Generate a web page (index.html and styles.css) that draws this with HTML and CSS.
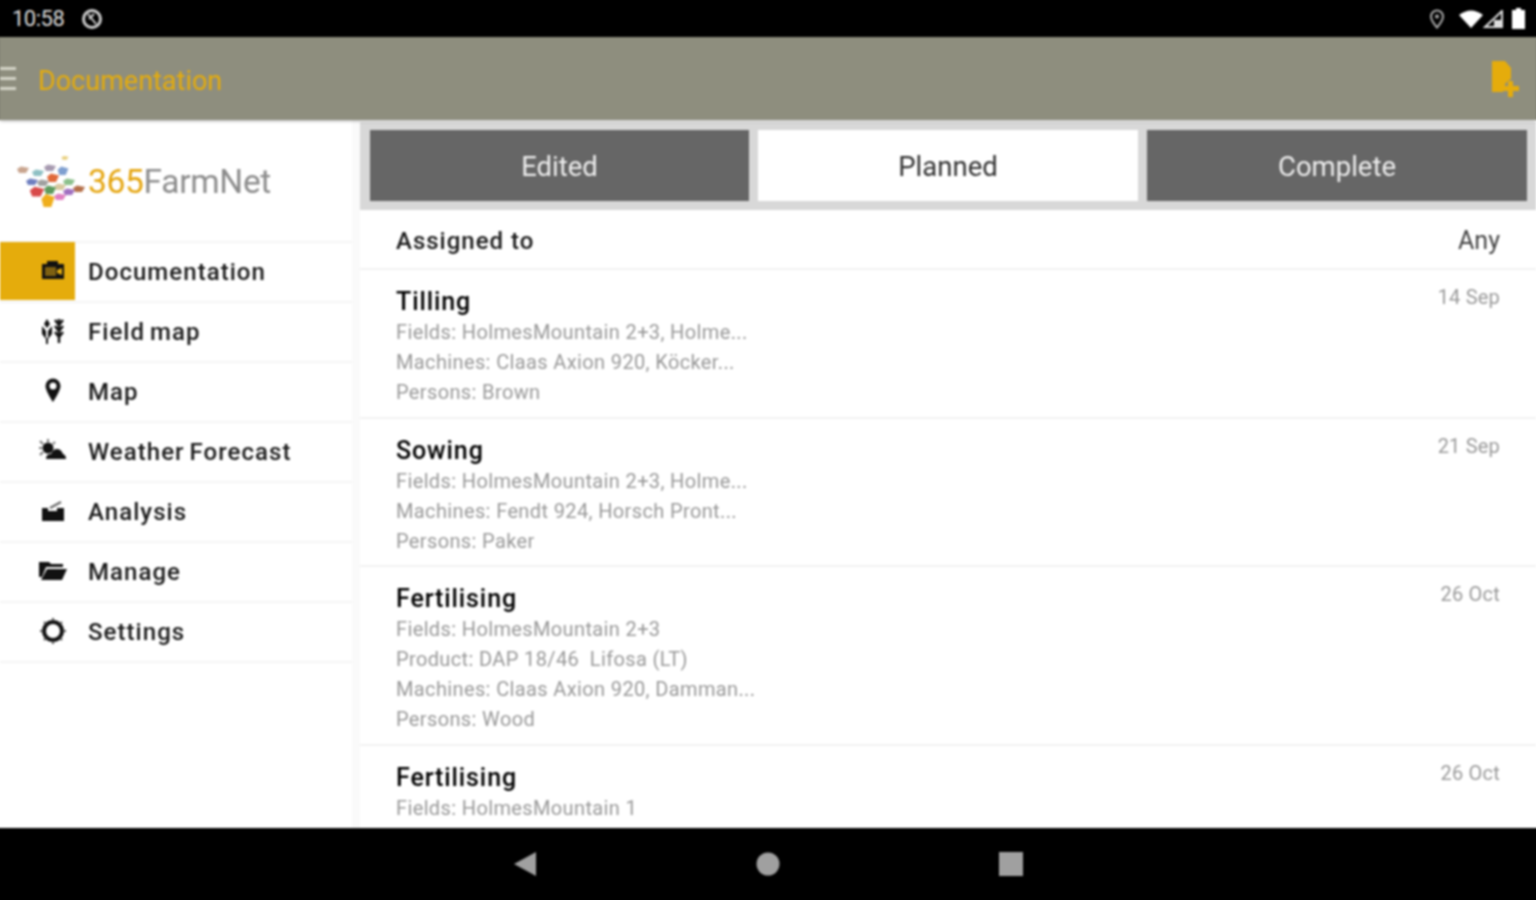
FILE: index.html
```html
<!DOCTYPE html>
<html lang="en">
<head>
    <meta charset="UTF-8">
    <meta name="viewport" content="width=device-width, initial-scale=1.0">
    <title>Documentation</title>
    <link rel="stylesheet" href="styles.css">
</head>
<body>
    <div class="app">
        <div class="status-bar">
            <span class="clock">10:58</span>
            <svg class="status-sync" width="24" height="24" viewBox="0 0 24 24"><circle cx="12" cy="12" r="8.5" fill="none" stroke="#ccc" stroke-width="3"/><path d="M8 7l8 10M14 7l-5 5" fill="none" stroke="#ccc" stroke-width="2"/></svg>
            <span class="status-right">
                <svg width="18" height="20" viewBox="0 0 18 20"><path d="M9 1.500a6 6 0 0 0-6 6c0 4 6 11 6 11s6-7 6-11a6 6 0 0 0-6-6z" fill="none" stroke="#aaa" stroke-width="2"/><circle cx="9" cy="7.500" r="2" fill="#aaa"/></svg>
                <svg class="status-wifi" width="24" height="18" viewBox="0 0 24 18"><path d="M0 5Q12-4 24 5L12 18z" fill="#fff"/></svg>
                <svg class="status-signal" width="20" height="18" viewBox="0 0 20 18"><path d="M19 1v16H2z" fill="none" stroke="#ddd" stroke-width="2"/><path d="M11 10v7h7v-7z" fill="#ddd"/></svg>
                <svg class="status-battery" width="13" height="21" viewBox="0 0 13 21"><path d="M4 0h5v2h4v19H0V2h4z" fill="#fff"/></svg>
            </span>
        </div>

        <div class="toolbar">
            <div class="burger"><i></i><i></i><i></i></div>
            <div class="toolbar-title">Documentation</div>
            <svg class="toolbar-add" width="29" height="38" viewBox="0 0 29 38"><path d="M1 1h13l6 7v11l-3 2-3 3v3l-2 2v3H1z" fill="#e5ac0c"/><path d="M17 21h5v5h6v5h-6v6h-5v-6h-5v-5h5z" fill="#e5ac0c"/></svg>
        </div>

        <div class="content">
            <aside class="sidebar">
                <div class="logo">
                    <svg width="72" height="56" viewBox="0 0 72 56">
                        <defs><path id="leaf" d="M-6-1L-2-3.500 6-2 3 3-4 3z"/></defs>
                        <use href="#leaf" transform="translate(51 4) scale(.6)" fill="#e8cf7d"/>
                        <use href="#leaf" transform="translate(9 16)" fill="#c9a58f"/>
                        <use href="#leaf" transform="translate(24 19)" fill="#8fc0c4"/>
                        <use href="#leaf" transform="translate(36 14)" fill="#a79ab0"/>
                        <use href="#leaf" transform="translate(49 17) scale(.9 1.300)" fill="#7f9fd0"/>
                        <use href="#leaf" transform="translate(18 28)" fill="#6f7fc0"/>
                        <use href="#leaf" transform="translate(29 29)" fill="#a0a0a0"/>
                        <use href="#leaf" transform="translate(39 24) scale(1 1.300)" fill="#e0693a"/>
                        <use href="#leaf" transform="translate(55 28)" fill="#8cc08c"/>
                        <use href="#leaf" transform="translate(46 33)" fill="#d8c8a0"/>
                        <use href="#leaf" transform="translate(65 35)" fill="#b5704a"/>
                        <use href="#leaf" transform="translate(23 38) scale(1.200 1.500)" fill="#d84a4a"/>
                        <use href="#leaf" transform="translate(36 36) scale(1 1.300)" fill="#5e9a5e"/>
                        <use href="#leaf" transform="translate(55 38)" fill="#a070c0"/>
                        <use href="#leaf" transform="translate(46 43)" fill="#e080c0"/>
                        <use href="#leaf" transform="translate(34 47) scale(1.100 2)" fill="#efae1c"/>
                    </svg>
                    <span class="logo-text"><b>365</b>FarmNet</span>
                </div>
                <nav class="menu">
                    <a class="menu-item active">
                        <span class="menu-icon"><svg width="24" height="20" viewBox="0 0 24 20"><path d="M1 4h5V1h11v3h6v15H1z" fill="#111"/><path d="M4 7h11v9H4z" fill="#7d6012"/><path d="M16 10l5-2v7l-5-2z" fill="#e5ac0c"/></svg></span>
                        <span class="menu-label">Documentation</span>
                    </a>
                    <a class="menu-item">
                        <span class="menu-icon"><svg width="24" height="26" viewBox="0 0 24 26"><path d="M6 1l3 5-3 4-3-4zM1 8l4 5v8l-4-5zM11 8l-4 5v8l4-5zM5 20h2v6H5z" fill="#111"/><path d="M18 1v24M14 8l4 5 4-5M14 14l4 5 4-5M14 2l4 5 4-5" fill="none" stroke="#111" stroke-width="2.500"/></svg></span>
                        <span class="menu-label">Field map</span>
                    </a>
                    <a class="menu-item">
                        <span class="menu-icon"><svg width="20" height="28" viewBox="0 0 20 28"><path d="M10 1.500a7.500 7.500 0 0 0-7.500 7.500c0 5 7.500 16 7.500 16s7.500-11 7.500-16A7.500 7.500 0 0 0 10 1.500z" fill="#111"/><circle cx="10" cy="9" r="3.500" fill="#fff"/></svg></span>
                        <span class="menu-label">Map</span>
                    </a>
                    <a class="menu-item">
                        <span class="menu-icon"><svg width="28" height="24" viewBox="0 0 28 24"><circle cx="9" cy="9" r="5.500" fill="#111"/><path d="M9 0v3M1 2l3 3M0 9h3M1 16l3-3M16 3l-2 2" stroke="#777" stroke-width="2"/><path d="M7 20q0-5 5-5 2-5 6-5 4 0 6 5 3 1 3 5z" fill="#111"/></svg></span>
                        <span class="menu-label">Weather Forecast</span>
                    </a>
                    <a class="menu-item">
                        <span class="menu-icon"><svg width="24" height="24" viewBox="0 0 24 24"><path d="M1 9h6v3h9V9h7v13H1z" fill="#111"/><path d="M9 9l11-6" stroke="#666" stroke-width="2"/></svg></span>
                        <span class="menu-label">Analysis</span>
                    </a>
                    <a class="menu-item">
                        <span class="menu-icon"><svg width="30" height="20" viewBox="0 0 30 20"><path d="M1 1h10l2 2h12v3H8L4 16H1z" fill="#111"/><path d="M9 8h20l-5 11H3z" fill="#111"/></svg></span>
                        <span class="menu-label">Manage</span>
                    </a>
                    <a class="menu-item">
                        <span class="menu-icon"><svg width="26" height="26" viewBox="0 0 26 26"><circle cx="13" cy="13" r="9" fill="none" stroke="#111" stroke-width="4"/><path d="M13 0v3M13 23v3M0 13h3M23 13h3M4 4l2 2M20 20l2 2M4 22l2-2M20 6l2-2" stroke="#555" stroke-width="2"/></svg></span>
                        <span class="menu-label">Settings</span>
                    </a>
                </nav>
            </aside>

            <main class="main">
                <div class="tabs">
                    <div class="tab">Edited</div>
                    <div class="tab selected">Planned</div>
                    <div class="tab">Complete</div>
                </div>
                <div class="filter-row">
                    <span class="filter-name">Assigned to</span>
                    <span class="filter-value">Any</span>
                </div>
                <div class="job">
                    <div class="job-head"><span class="job-title">Tilling</span><span class="job-date">14 Sep</span></div>
                    <div class="job-line">Fields: HolmesMountain 2+3, Holme...</div>
                    <div class="job-line">Machines: Claas Axion 920, Köcker...</div>
                    <div class="job-line">Persons: Brown</div>
                </div>
                <div class="job">
                    <div class="job-head"><span class="job-title">Sowing</span><span class="job-date">21 Sep</span></div>
                    <div class="job-line">Fields: HolmesMountain 2+3, Holme...</div>
                    <div class="job-line">Machines: Fendt 924, Horsch Pront...</div>
                    <div class="job-line">Persons: Paker</div>
                </div>
                <div class="job">
                    <div class="job-head"><span class="job-title">Fertilising</span><span class="job-date">26 Oct</span></div>
                    <div class="job-line">Fields: HolmesMountain 2+3</div>
                    <div class="job-line">Product: DAP 18/46 &nbsp;Lifosa (LT)</div>
                    <div class="job-line">Machines: Claas Axion 920, Damman...</div>
                    <div class="job-line">Persons: Wood</div>
                </div>
                <div class="job">
                    <div class="job-head"><span class="job-title">Fertilising</span><span class="job-date">26 Oct</span></div>
                    <div class="job-line">Fields: HolmesMountain 1</div>
                </div>
            </main>
        </div>

        <div class="nav-bar">
            <svg width="24" height="26" viewBox="0 0 24 26"><path d="M23 1v24L1 13z" fill="#a0a0a0"/></svg>
            <svg width="24" height="24" viewBox="0 0 24 24"><circle cx="12" cy="12" r="11.500" fill="#a0a0a0"/></svg>
            <svg width="24" height="24" viewBox="0 0 24 24"><rect width="24" height="24" fill="#a0a0a0"/></svg>
        </div>
    </div>
</body>
</html>
```

FILE: styles.css
```css
html, body {
    margin: 0;
    height: 100%;
    overflow: hidden;
}
body {
    font-family: Roboto, "Liberation Sans", sans-serif;
    background-color: #000;
}
svg {
    display: block;
}
.app {
    width: 1536px;
    height: 900px;
    display: flex;
    flex-direction: column;
    filter: blur(0.9px);
}
.status-bar {
    height: 37px;
    flex: none;
    background-color: #000;
    color: #ddd;
    display: flex;
    align-items: center;
    padding: 0 11px 0 12px;
}
.clock {
    font-size: 22px;
    letter-spacing: -0.5px;
    width: 68px;
}
.status-right {
    margin-left: auto;
    display: flex;
    align-items: center;
}
.status-wifi {
    margin-left: 13px;
}
.status-battery {
    margin-left: 9px;
}
.toolbar {
    height: 83px;
    flex: none;
    background-color: #8e8e7e;
    /* side shadows keep the blur from darkening the window edges */
    box-shadow: 0 1px 3px rgba(0, 0, 0, 0.3), -6px 0 0 #8e8e7e, 6px 0 0 #8e8e7e;
    display: flex;
    align-items: center;
    position: relative;
    z-index: 2;
}
.burger {
    width: 16px;
    display: flex;
    flex-direction: column;
    gap: 7px;
}
.burger i {
    display: block;
    height: 3px;
    background-color: #d5d5c8;
}
.toolbar-title {
    margin-left: 22px;
    padding-top: 4px;
    font-size: 27px;
    color: #e5ac0c;
}
.toolbar-add {
    margin-left: auto;
    margin-right: 16px;
}
.content {
    flex: 1;
    min-height: 0;
    display: flex;
    background-color: #fff;
    box-shadow: -6px 0 0 #fff, 6px 0 0 #fff;
}
.sidebar {
    width: 352px;
    flex: none;
    padding-top: 2px;
    border-right: 8px solid #fafafa;
}
.logo {
    height: 119px;
    display: flex;
    align-items: center;
    padding-left: 14px;
    box-sizing: border-box;
}
.logo-text {
    font-size: 33.5px;
    color: #8c8c8c;
    margin-left: 2px;
    letter-spacing: -0.3px;
}
.logo-text b {
    font-weight: 400;
    color: #e5a50f;
}
.menu-item {
    height: 60px;
    box-sizing: border-box;
    display: flex;
    align-items: center;
    border-top: 2px solid #f4f4f4;
}
.menu-item:last-child {
    border-bottom: 2px solid #f4f4f4;
    height: 62px;
}
.menu-icon {
    width: 75px;
    height: 58px;
    flex: none;
    box-sizing: border-box;
    padding-left: 31px;
    display: flex;
    align-items: center;
    justify-content: center;
}
.menu-icon svg {
    margin-bottom: 3px;
}
.menu-item.active .menu-icon {
    background-color: #e5ac0c;
    margin-bottom: 2px;
}
.menu-label {
    margin-left: 13px;
    font-size: 24px;
    font-weight: 500;
    letter-spacing: 1.05px;
    word-spacing: -2px;
    color: #1a1a1a;
}
.main {
    flex: 1;
    min-width: 0;
    height: 706px;
    overflow: hidden;
}
.tabs {
    margin-top: 2px;
    height: 88px;
    box-sizing: border-box;
    background-color: #d8d8d8;
    padding: 8px 9px 9px 10px;
    display: flex;
    gap: 9px;
}
.tab {
    flex: 1;
    background-color: #666;
    color: #eee;
    font-size: 27.5px;
    padding-top: 1px;
    display: flex;
    align-items: center;
    justify-content: center;
}
.tab:first-child {
    flex: none;
    width: 379px;
}
.tab.selected {
    background-color: #fff;
    color: #333;
}
.filter-row {
    height: 60px;
    box-sizing: border-box;
    padding: 3px 36px 0;
    border-bottom: 2px solid #f2f2f2;
    display: flex;
    align-items: center;
    justify-content: space-between;
}
.filter-name {
    font-size: 24px;
    font-weight: 500;
    letter-spacing: 1px;
    color: #1a1a1a;
}
.filter-value {
    font-size: 25px;
    color: #444;
}
.job {
    padding: 17px 36px 9.5px;
    border-bottom: 2px solid #f2f2f2;
}
.job-head {
    display: flex;
    justify-content: space-between;
    height: 28px;
    margin-bottom: 2px;
}
.job-title {
    font-size: 25px;
    font-weight: 500;
    letter-spacing: 0.9px;
    color: #000;
}
.job-date {
    font-size: 20px;
    color: #999;
    letter-spacing: 0.2px;
    margin-top: -2px;
}
.job-line {
    font-size: 20px;
    line-height: 30px;
    color: #999;
    letter-spacing: 0.37px;
    white-space: nowrap;
}
.nav-bar {
    height: 72px;
    flex: none;
    background-color: #000;
    display: flex;
    align-items: center;
    padding-left: 513px;
    gap: 219px;
}
```
